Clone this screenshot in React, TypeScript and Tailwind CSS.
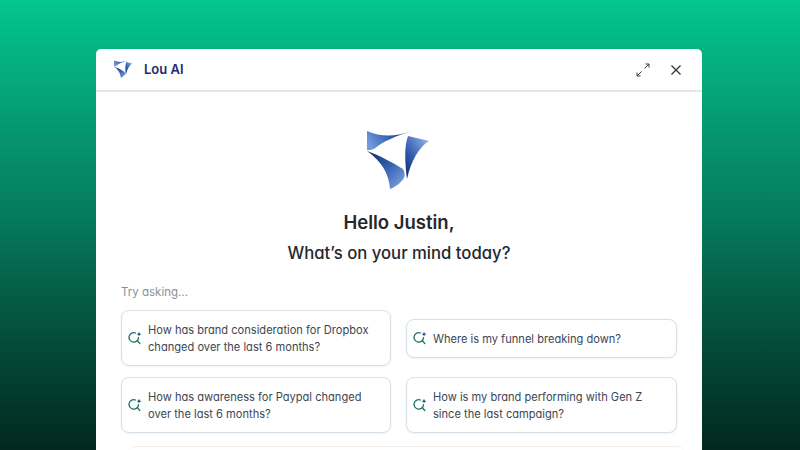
const questions = [
  "How has brand consideration for Dropbox changed over the last 6 months?",
  "Where is my funnel breaking down?",
  "How has awareness for Paypal changed over the last 6 months?",
  "How is my brand performing with Gen Z since the last campaign?",
];

function Logo({ className, id }: { className: string; id: string }) {
  return (
    <svg viewBox="0 0 64 60" className={className}>
      <defs>
        <linearGradient id={`${id}-a`} x1="0" y1="0.5" x2="1" y2="0.2">
          <stop offset="0" stopColor="#7199dc" />
          <stop offset="0.5" stopColor="#3561b3" />
          <stop offset="1" stopColor="#10296a" />
        </linearGradient>
        <linearGradient id={`${id}-b`} x1="0.9" y1="0.1" x2="0.1" y2="1">
          <stop offset="0" stopColor="#8aace4" />
          <stop offset="0.55" stopColor="#3561b3" />
          <stop offset="1" stopColor="#10296a" />
        </linearGradient>
        <linearGradient id={`${id}-c`} x1="1" y1="1" x2="0" y2="0">
          <stop offset="0" stopColor="#8aace4" />
          <stop offset="0.5" stopColor="#3561b3" />
          <stop offset="1" stopColor="#0f2766" />
        </linearGradient>
      </defs>
      <path d="M0 0 C14 6 28 6 44 0 C30 5 16 10 7 18 C5 19 2 19 0 19 Z" fill={`url(#${id}-a)`} />
      <path d="M41 5 L62 10 C52 16 44 30 40 48 C38 32 37 16 41 5 Z" fill={`url(#${id}-b)`} />
      <path d="M0 20 C14 25 26 32 36 38 C38 41 38 45 37 47 C34 52 28 56 23 58 C22 42 14 30 0 20 Z" fill={`url(#${id}-c)`} />
    </svg>
  );
}

function SearchSpark() {
  return (
    <svg viewBox="0 0 16 16" className="h-[14px] w-[14px] shrink-0" fill="none">
      <path d="M12 7.5 A5.4 5.4 0 1 1 8.6 2.3" stroke="#17725f" strokeWidth="1.5" strokeLinecap="round" />
      <path d="M10.8 11.2 L13.6 14.4" stroke="#17725f" strokeWidth="1.5" strokeLinecap="round" />
      <path d="M12.6 0.8 L13.4 2.8 L15.4 3.6 L13.4 4.4 L12.6 6.4 L11.8 4.4 L9.8 3.6 L11.8 2.8 Z" fill="#1c3f73" />
    </svg>
  );
}

function QuestionCard({ text }: { text: string }) {
  return (
    <div className="flex items-center gap-[6px] rounded-lg border border-[#d7e0e8] bg-white py-[10px] pl-[6px] pr-3 text-[11.1px] leading-[17px] text-[#3c4654] shadow-[0_1px_2px_rgba(60,90,130,0.08)]">
      <SearchSpark />
      <p className="-mb-px mt-px">{text}</p>
    </div>
  );
}

export default function App() {
  return (
    <div className="flex h-[450px] w-[800px] justify-center overflow-hidden bg-gradient-to-b from-[#03c68f] via-[#05775a] to-[#02281f] pr-[2px] pt-[49px] [font-family:Inter,'Liberation_Sans',sans-serif] [font-feature-settings:'cv11']">
      <div className="h-[480px] w-[606px] rounded-t-[5px] bg-white">
        <header className="flex h-[43px] items-center justify-between border-b-2 border-[#e4e6e8] pl-[18px] pr-5">
          <div className="flex items-center gap-[11px]">
            <Logo id="small" className="h-[19px] w-[19px]" />
            <span className="mt-px text-[13px] font-semibold text-[#1d2b6b]">Lou AI</span>
          </div>
          <div className="flex items-center gap-[20px] text-[#333a42]">
            <svg viewBox="0 0 14 14" className="h-[14px] w-[14px]" fill="none" stroke="currentColor" strokeWidth="1">
              <path d="M8.5 5.5 L13 1 M9.5 1 H13 V4.5 M5.5 8.5 L1 13 M1 9.5 V13 H4.5" />
            </svg>
            <svg viewBox="0 0 12 12" className="h-3 w-3" fill="none" stroke="currentColor" strokeWidth="1.4">
              <path d="M1.5 1.5 L10.5 10.5 M10.5 1.5 L1.5 10.5" />
            </svg>
          </div>
        </header>

        <main className="px-[25px]">
          <div className="mt-[39px] flex justify-center">
            <Logo id="large" className="h-[60px] w-[64px]" />
          </div>
          <h1 className="mt-[19px] text-center text-[18.5px] font-semibold leading-[24px] text-[#24282d]">Hello Justin,</h1>
          <h2 className="mt-[7px] text-center text-[16.7px] font-[450] leading-[24px] text-[#24282d]">What’s on your mind today?</h2>
          <p className="mt-[19px] text-[11.5px] leading-[16px] text-[#8a8f96]">Try asking...</p>

          <div className="mt-[10px] grid grid-cols-[270px_271px] items-center gap-x-[15px] gap-y-[11px]">
            {questions.map((q) => (
              <QuestionCard key={q} text={q} />
            ))}
          </div>
          <div className="mx-[7px] mt-[13px] h-4 w-[557px] rounded-t-lg border-t border-[#f0eeee]" />
        </main>
      </div>
    </div>
  );
}
